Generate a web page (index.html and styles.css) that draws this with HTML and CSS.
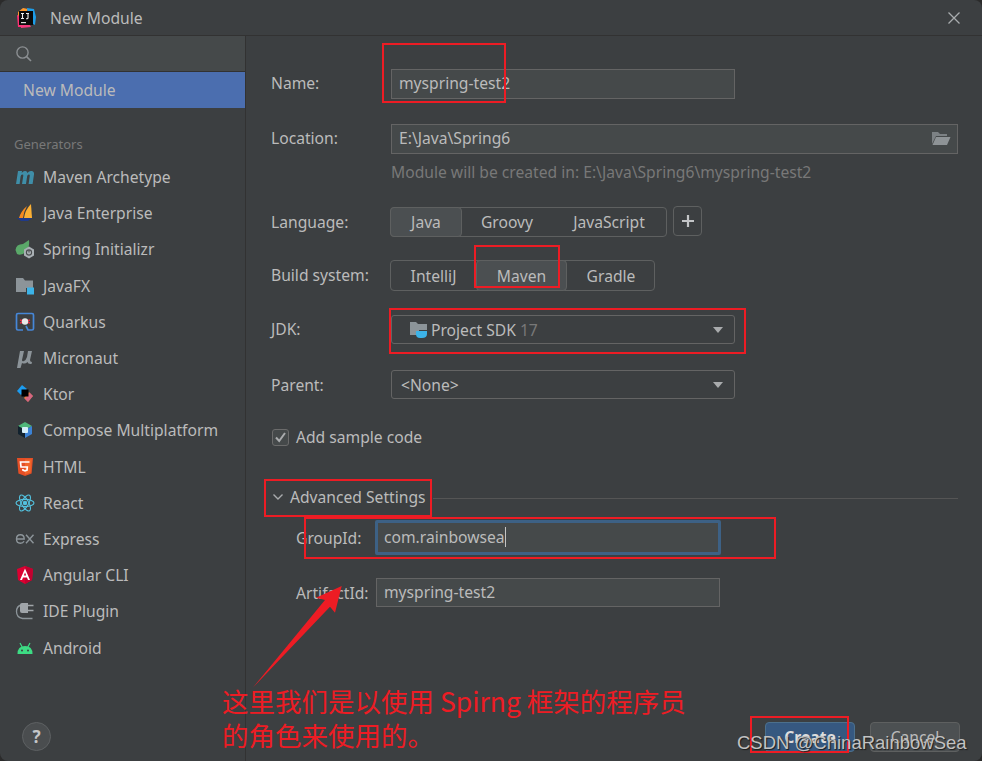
FILE: index.html
```html
<!DOCTYPE html>
<html lang="en">
<head>
<meta charset="utf-8">
<title>New Module</title>
<link rel="stylesheet" href="styles.css">
</head>
<body>
<div class="dialog">
  <header class="titlebar">
    <svg class="app-logo" width="22" height="22" viewBox="0 0 22 22">
      <path d="M3 5 L8 1 L13 2 L9 10 L3 9Z" fill="#ff9a2e"/>
      <path d="M12 1 L19 2 L21 10 L20 18 L14 15Z" fill="#1d9de8"/>
      <path d="M2 8 L7 10 L7 20 L3 20Z" fill="#fa2f73"/>
      <path d="M5 14 L13 14 L16 20 L6 21Z" fill="#f5387d"/>
      <rect x="4" y="4" width="14" height="14" fill="#0a0a0a"/>
      <rect x="6" y="15" width="5" height="1.2" fill="#ddd"/>
      <path d="M6 6.5h3M7.5 6.5v5M6 11.5h3M11 6.5h3M13 6.5v4.2q0 1-1 1h-1" fill="none" stroke="#eee" stroke-width="1.1"/>
    </svg>
    <span class="title-text">New Module</span>
    <svg class="close" width="14" height="14" viewBox="0 0 14 14"><path d="M1.5 1.5 L12.5 12.5M12.5 1.5 L1.5 12.5" stroke="#a9acae" stroke-width="1.3"/></svg>
  </header>
  <div class="body">
    <aside class="sidebar">
      <div class="search">
        <svg width="18" height="18" viewBox="0 0 18 18"><circle cx="7.5" cy="7.5" r="5.6" fill="none" stroke="#8b8f92" stroke-width="1.4"/><path d="M11.6 11.6 L16 16" stroke="#8b8f92" stroke-width="1.6"/></svg>
      </div>
      <div class="selected">New Module</div>
      <div class="group-title">Generators</div>
      <ul class="list">
        <li><svg class="ico" viewBox="0 0 20 20"><path d="M1 17 L3 4 H7 L6.7 6 Q8.4 3.6 10.4 4 Q12 4.2 12.4 6 Q14.2 3.6 16.4 4 Q19.4 4.4 19 7.5 L17.6 17 H13.6 L14.8 8.8 Q15 7.4 13.8 7.4 Q12.4 7.4 12.1 9.4 L11 17 H7 L8.3 8.8 Q8.5 7.4 7.3 7.4 Q5.9 7.4 5.6 9.4 L4.6 17Z" fill="#3f8ea8"/></svg>Maven Archetype</li>
        <li><svg class="ico" viewBox="0 0 20 20"><path d="M16 1 L17 15 L9 15 Q10 7 16 1Z" fill="#fbb034"/><path d="M12 3 Q6 8 4 15 L8 15 Q9 8 12 3Z" fill="#f58a1f"/><path d="M2 15 H17 L13 18 L6 18Z" fill="#1f3a8a"/></svg>Java Enterprise</li>
        <li><svg class="ico" viewBox="0 0 20 20"><path d="M0.5 11 Q1 5 8 5 L14 1 Q15 8 11 13 Q6 17 2 15Z" fill="#5aa969"/><path d="M14 7.5 L19 10.5 V16.5 L14 19.5 L9 16.5 V10.5Z" fill="#a9b0b4"/><circle cx="14" cy="13.5" r="2.6" fill="none" stroke="#4a4d4f" stroke-width="1.1"/><path d="M14 11 V13.5" stroke="#4a4d4f" stroke-width="1.1"/></svg>Spring Initializr</li>
        <li><svg class="ico" viewBox="0 0 20 20"><path d="M1 2 H8 L10 4.5 H18 V12 H11 V16 H1Z" fill="#8c9499"/><rect x="12" y="11.5" width="7" height="7" fill="#3cb3e8"/></svg>JavaFX</li>
        <li><svg class="ico" viewBox="0 0 20 20"><path d="M8 18 H3 Q1.5 18 1.5 16.5 V3 Q1.5 1.5 3 1.5 H17 Q18.5 1.5 18.5 3 V16.5 Q18.5 18 17 18 H13 L11 14" fill="none" stroke="#4687d8" stroke-width="1.7"/><path d="M5 8 L15 11M15 8 L5 11" stroke="#e0263f" stroke-width="1.6"/><circle cx="10" cy="9.5" r="3.2" fill="#e8e8e8"/></svg>Quarkus</li>
        <li><svg class="ico" viewBox="0 0 20 20"><path d="M5 3 H9 L7 12 Q7 14 9 13 Q11 12 12 9 L13 3 H17 L15 12 Q15 14 17 14 L16.5 16 Q13 16.5 12.5 14 Q10 16.5 7 15 L5.5 20 H2Z" fill="#8c9499"/></svg>Micronaut</li>
        <li><svg class="ico" viewBox="0 0 20 20"><path d="M7 1 L2 7 L6 11 L12 5Z" fill="#1c9cf0"/><path d="M14 8 L9 14 L13 18 L18 12Z" fill="#ef7d3c"/><path d="M15 9 L10 15 L13 18 L18 12Z" fill="#c85ca0" opacity=".7"/><rect x="6.5" y="5.5" width="7" height="7" fill="#000"/></svg>Ktor</li>
        <li><svg class="ico" viewBox="0 0 20 20"><path d="M10 2 L17 6 L10 10 L3 6Z" fill="#4fb67a"/><path d="M17 6 V14 L10 18 V10Z" fill="#3b82d6"/><path d="M3 6 V14 L10 18 V10Z" fill="#12222e"/><rect x="7" y="7" width="6" height="6" rx="1" fill="#d6eef8"/></svg>Compose Multiplatform</li>
        <li><svg class="ico" viewBox="0 0 20 20"><path d="M2 1 H18 L16.6 16.5 L10 19 L3.4 16.5Z" fill="#e44f26"/><path d="M10 2.4 H16.7 L15.5 15.6 L10 17.6Z" fill="#f1662a"/><path d="M14.5 5 H5.5 L6 10 H12.3 L12 13.2 L10 13.8 L8 13.2 L7.9 12" fill="none" stroke="#fff" stroke-width="1.7"/></svg>HTML</li>
        <li><svg class="ico" viewBox="0 0 20 20" fill="none" stroke="#53c1de" stroke-width="1.1"><ellipse cx="10" cy="10" rx="9" ry="3.6"/><ellipse cx="10" cy="10" rx="9" ry="3.6" transform="rotate(60 10 10)"/><ellipse cx="10" cy="10" rx="9" ry="3.6" transform="rotate(120 10 10)"/><circle cx="10" cy="10" r="1.7" fill="#53c1de"/></svg>React</li>
        <li><svg class="ico" viewBox="0 0 20 20" fill="none" stroke="#8c9499" stroke-width="1.4"><path d="M1.5 10 H9.2 Q9.2 5.8 5.4 5.8 Q1.5 5.8 1.5 10 Q1.5 14.2 5.4 14.2 Q8 14.2 9 12.2"/><path d="M11 5.8 L18.5 14.2M18.5 5.8 L11 14.2"/></svg>Express</li>
        <li><svg class="ico" viewBox="0 0 20 20"><path d="M10 1 L18 4 L17 15 L10 19 L3 15 L2 4Z" fill="#dd0031"/><path d="M10 1 L18 4 L17 15 L10 19Z" fill="#c3002f"/><path d="M10 3.5 L15 15 H13 L12 12.4 H8 L7 15 H5Z M10 7.5 L8.8 10.6 H11.2Z" fill="#fff" fill-rule="evenodd"/></svg>Angular CLI</li>
        <li><svg class="ico" viewBox="0 0 20 20"><path d="M7 4.5 Q2 5.5 2 11 Q2 17 8 18 H18" fill="none" stroke="#8c9499" stroke-width="1.3" transform="translate(-.5 -.5)"/><path d="M7 2 H13 V12 H7 Q5 12 5 10 V4 Q5 2 7 2Z" fill="#a0a5a9"/><path d="M13 4.5 H18.5M13 9.5 H18.5" stroke="#a0a5a9" stroke-width="1.6"/></svg>IDE Plugin</li>
        <li><svg class="ico" viewBox="0 0 20 20"><path d="M2.5 16 Q2.5 8 10 8 Q17.5 8 17.5 16Z" fill="#3ddc84"/><path d="M5 5 L7.2 9M15 5 L12.8 9" stroke="#3ddc84" stroke-width="1.2"/><circle cx="7" cy="12.6" r="1" fill="#3c3f41"/><circle cx="13" cy="12.6" r="1" fill="#3c3f41"/></svg>Android</li>
      </ul>
      <div class="help">?</div>
    </aside>
    <main class="form">
      <div class="row row-name">
        <label class="label">Name:</label>
        <div class="input w344">myspring-test2</div>
      </div>
      <div class="row row-loc">
        <label class="label">Location:</label>
        <div class="input grow">E:\Java\Spring6
          <svg class="folder" width="20" height="16" viewBox="0 0 20 16"><path d="M1 14 V2 H7 L9 4 H16 V6 H5 L1 14Z" fill="#7c8184"/><path d="M5 7 H19.5 L16 15 H1.5Z" fill="#8e9396"/></svg>
        </div>
      </div>
      <div class="hint">Module will be created in: E:\Java\Spring6\myspring-test2</div>
      <div class="row row-lang">
        <label class="label label-low">Language:</label>
        <div class="seg seg-lang">
          <span class="seg-item active lang-java">Java</span>
          <span class="seg-item lang-groovy">Groovy</span>
          <span class="seg-item lang-js">JavaScript</span>
        </div>
        <div class="plus"><svg width="14" height="14" viewBox="0 0 14 14"><path d="M7 1 V13M1 7 H13" stroke="#c3c5c7" stroke-width="2.2"/></svg></div>
      </div>
      <div class="row row-build">
        <label class="label">Build system:</label>
        <div class="seg seg-build">
          <span class="seg-item b-idea">IntelliJ</span>
          <span class="seg-item active b-maven">Maven</span>
          <span class="seg-item b-gradle">Gradle</span>
        </div>
      </div>
      <div class="row row-jdk">
        <label class="label">JDK:</label>
        <div class="select w344">
          <svg class="sdk" width="20" height="18" viewBox="0 0 20 18"><path d="M1 14 V1 H7 L9 3 H18 V9 H10 V14Z" fill="#8c9499"/><path d="M7 10 H18 V13 Q18 17 13 17 H11 Q7 17 7 13Z" fill="#3cb3e8"/></svg>
          <span>Project SDK <em class="dim">17</em></span>
          <i class="caret"></i>
        </div>
      </div>
      <div class="row row-parent">
        <label class="label label-low">Parent:</label>
        <div class="select w344 parent-sel"><span>&lt;None&gt;</span><i class="caret"></i></div>
      </div>
      <div class="row row-check">
        <span class="checkbox"><svg width="13" height="13" viewBox="0 0 13 13"><path d="M2 6.5 L5.2 10 L11 2" fill="none" stroke="#a9abad" stroke-width="2"/></svg></span>
        <span>Add sample code</span>
      </div>
      <div class="row row-adv">
        <svg class="chev" width="12" height="8" viewBox="0 0 12 8"><path d="M1.5 1.5 L6 6 L10.5 1.5" fill="none" stroke="#a9abad" stroke-width="1.4"/></svg>
        <span>Advanced Settings</span>
        <span class="rule"></span>
      </div>
      <div class="row row-group">
        <label class="label-sub">GroupId:</label>
        <div class="input focus">com.rainbowsea<span class="cursor"></span></div>
      </div>
      <div class="row row-art">
        <label class="label-sub">ArtifactId:</label>
        <div class="input art">myspring-test2</div>
      </div>
      <div class="actions">
        <span class="btn primary">Create</span>
        <span class="btn">Cancel</span>
      </div>
    </main>
  </div>

  <div class="mark m-name"></div>
  <div class="mark m-maven"></div>
  <div class="mark m-jdk"></div>
  <div class="mark m-adv"></div>
  <div class="mark m-group"></div>
  <div class="mark m-create"></div>
  <svg class="arrow" width="120" height="120" viewBox="0 0 120 120"><path d="M12.5 113 L85 25 L76 22.7 L101.7 11 L95 37.7 L90 31.7Z" fill="#ed1c24"/></svg>
  <div class="note">这里我们是以使用 Spirng 框架的程序员<br>的角色来使用的。</div>
  <div class="watermark">CSDN @ChinaRainbowSea</div>
</div>
</body>
</html>
```
FILE: styles.css
```css
* { box-sizing: border-box; }
html, body { margin: 0; padding: 0; background: #2b2b2b; }
body { width: 982px; height: 761px; overflow: hidden; }
.dialog {
  position: relative; width: 982px; height: 761px; background: #3c3f41;
  border-radius: 8px; overflow: hidden; color: #bbbbbb;
  font: 15.65px/20px "Noto Sans", "Open Sans", sans-serif;
  display: flex; flex-direction: column;
}
.titlebar { height: 36px; flex: none; display: flex; align-items: center; padding: 0 21px 0 15px; border-bottom: 1px solid #323232; }
.app-logo { flex: none; }
.title-text { margin-left: 13px; flex: 1; }
.body { flex: 1; display: flex; min-height: 0; }
.sidebar { position: relative; width: 246px; flex: none; border-right: 1px solid #323232; }
.search { height: 36px; background: #45494a; border-bottom: 1px solid #323232; padding: 9px 0 0 15px; }
.search svg { display: block; }
.selected { height: 36px; background: #4b6eaf; padding: 8px 0 0 23px; }
.group-title { margin: 26px 0 0 14px; font-size: 13px; color: #787878; height: 20px; line-height: 20px; }
.list { list-style: none; margin: 5px 0 0; padding: 0; }
.list li { height: 36.2px; display: flex; align-items: center; padding-left: 15px; white-space: nowrap; }
.ico { width: 20px; height: 20px; flex: none; margin-right: 8px; }
.help {
  position: absolute; left: 22px; top: 686px; width: 29px; height: 29px; border-radius: 50%;
  background: #4a4d4f; border: 1px solid #5e6163; color: #c4c6c8; font-weight: 700; font-size: 17px;
  display: flex; align-items: center; justify-content: center;
}
.form { flex: 1; position: relative; padding: 33px 24px 0 25px; min-width: 0; }
.row { display: flex; align-items: center; }
.label { width: 120px; flex: none; margin-top: -2px; }
.label-low { margin-top: 0; }
.label-sub { flex: none; margin-left: 25px; width: 79px; white-space: nowrap; }
.input {
  height: 30px; background: #45494a; border: 1px solid #646464; padding: 1px 7px 3px; color: #bbbbbb;
  display: flex; align-items: center; position: relative; white-space: nowrap;
}
.w344 { width: 344px; }
.grow { flex: 1; margin-right: 0; justify-content: space-between; padding-right: 6px; }
.folder { flex: none; }
.row-name { height: 30px; }
.row-loc { height: 30px; margin-top: 25px; }
.hint { margin: 8px 0 0 120px; color: #787878; height: 20px; }
.row-lang { margin-top: 25px; height: 30px; }
.row-build { margin-top: 23px; height: 31px; }
.row-jdk { margin-top: 24px; height: 29px; }
.row-parent { margin-top: 26px; height: 29px; }
.row-check { margin-top: 29px; height: 18px; margin-left: 1px; }
.row-adv { margin-top: 41px; height: 20px; margin-left: 1px; }
.row-group { margin-top: 13px; height: 35px; }
.row-art { margin-top: 23px; height: 29px; }
.seg { display: flex; height: 100%; margin-left: -1px; border: 1px solid #5e6060; border-radius: 4px; }
.seg-lang { width: 277px; }
.seg-build { width: 265px; }
.seg-item { display: flex; align-items: center; justify-content: center; height: 100%; flex: none; }
.seg-item.active { background: #4b4f51; border: 1px solid #5e6060; border-radius: 4px; margin: -1px 0; height: calc(100% + 2px); }
.lang-java { width: 72px; margin-left: -1px !important; }
.lang-groovy { width: 90px; }
.lang-js { width: 114px; }
.b-idea { width: 85px; }
.b-maven { width: 91px; }
.b-gradle { width: 88px; }
.plus { width: 29px; height: 30px; margin: -2px 0 0 6px; border: 1px solid #5e6060; border-radius: 4px; display: flex; align-items: center; justify-content: center; }
.select { height: 29px; border: 1px solid #646464; border-radius: 3px; display: flex; align-items: center; padding: 0 11px 0 17px; gap: 2px; }
.parent-sel { padding-left: 9px; }
.select span { flex: 1; }
.dim { font-style: normal; color: #787878; }
.sdk { flex: none; }
.caret { width: 0; height: 0; border-left: 5.5px solid transparent; border-right: 5.5px solid transparent; border-top: 6px solid #a9abad; }
.checkbox { width: 17px; height: 17px; border: 1px solid #6b6b6b; border-radius: 3px; background: #45494a; display: flex; align-items: center; justify-content: center; margin-right: 7px; flex: none; }
.chev { flex: none; margin-right: 6px; }
.rule { flex: 1; height: 1px; margin: 2px 0 0 7px; background: #555555; }
.focus { width: 346px; height: 35px; background: #45494a; border: 3px solid #3d6185; padding: 0 0 1px 6px; border-radius: 2px; }
.cursor { display: inline-block; width: 1px; height: 20px; background: #c4c4c4; }
.art { width: 344px; height: 29px; margin-left: 1px; background: #45494a; }
.actions { position: absolute; top: 686px; right: 22px; display: flex; gap: 15px; }
.btn { width: 90px; height: 30px; border-radius: 4px; background: #4c5052; border: 1px solid #5e6060; display: flex; align-items: center; justify-content: center; }
.btn.primary { background: #365880; border-color: #4c708c; color: #dddddd; font-weight: 700; }
.mark { position: absolute; border: 2px solid #ed1c24; }
.m-name { left: 382px; top: 43px; width: 124px; height: 60px; }
.m-maven { left: 474px; top: 245px; width: 86px; height: 43px; }
.m-jdk { left: 389px; top: 308px; width: 357px; height: 46px; }
.m-adv { left: 264px; top: 479px; width: 168px; height: 38px; }
.m-group { left: 304px; top: 517px; width: 472px; height: 42px; }
.m-create { left: 750px; top: 716px; width: 99px; height: 37px; }
.arrow { position: absolute; left: 240px; top: 575px; }
.note { position: absolute; left: 222px; top: 684px; color: #ed1c24; font: 26.5px/34px "Noto Sans CJK SC", "Noto Sans", sans-serif; white-space: nowrap; }
.watermark { position: absolute; left: 737px; top: 731px; color: #c2c2c2; font: 18.5px/24px "Liberation Sans", sans-serif; text-shadow: 1px 1px 1px #1c1c1c; white-space: nowrap; }
```
